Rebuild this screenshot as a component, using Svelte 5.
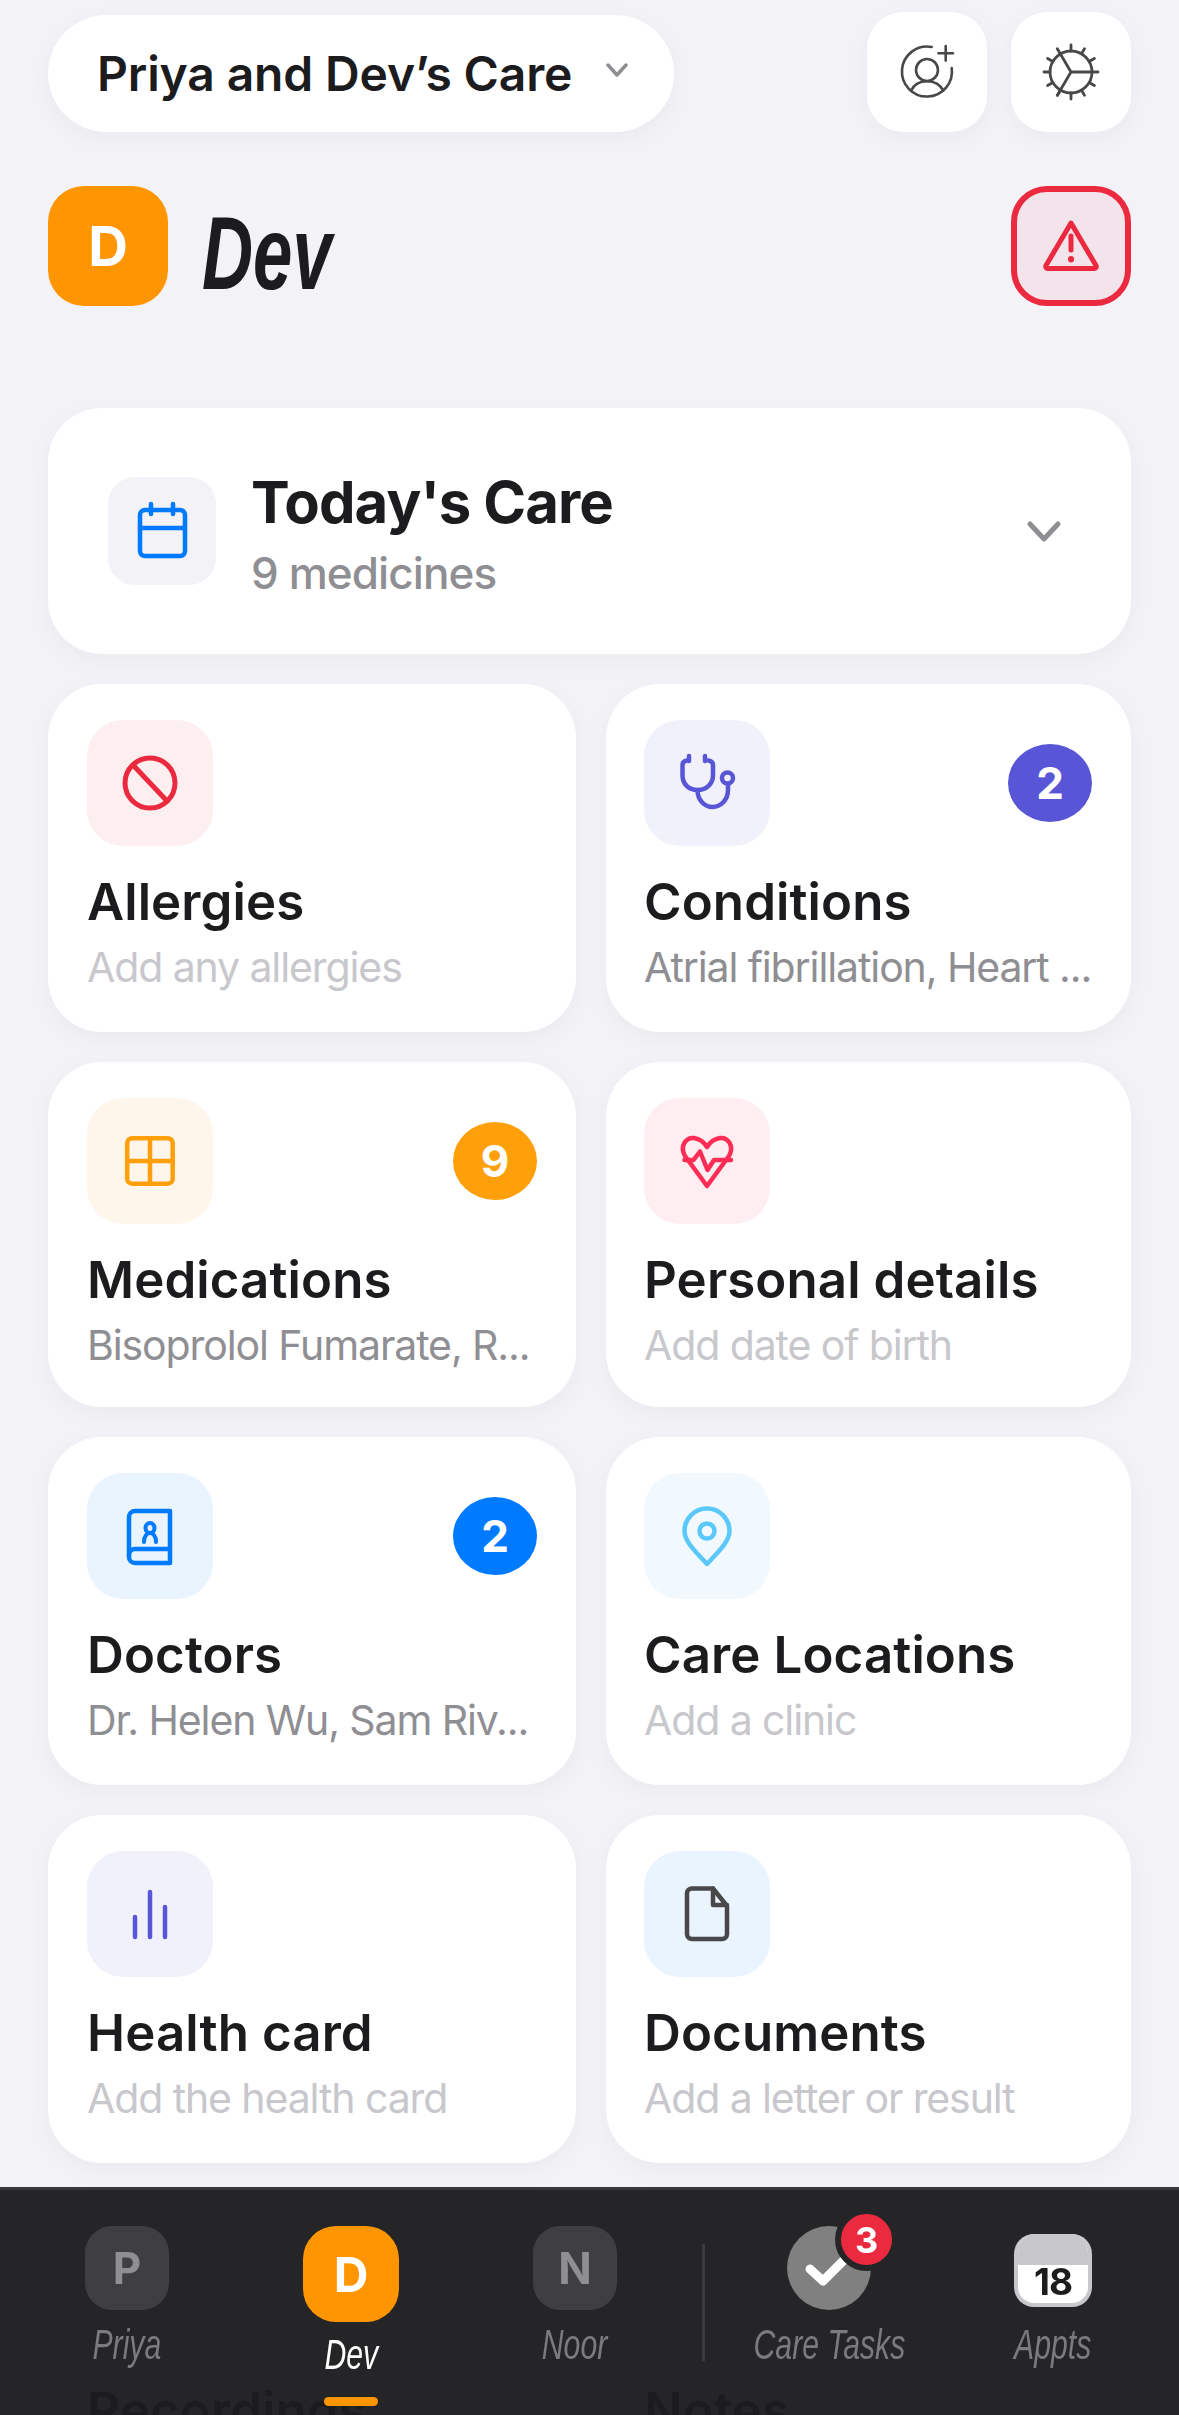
<script>
	const cards = [
		{ icon: 'ban', tile: '#fdeeef', title: 'Allergies', sub: 'Add any allergies', empty: true },
		{ icon: 'stethoscope', tile: '#f1f1fc', title: 'Conditions', sub: 'Atrial fibrillation, Heart ...', count: 2, badge: '#5856d6' },
		{ icon: 'pills', tile: '#fff6eb', title: 'Medications', sub: 'Bisoprolol Fumarate, R...', count: 9, badge: '#ff9f0a' },
		{ icon: 'heart', tile: '#ffeef1', title: 'Personal details', sub: 'Add date of birth', empty: true },
		{ icon: 'book', tile: '#e9f4ff', title: 'Doctors', sub: 'Dr. Helen Wu, Sam Riv...', count: 2, badge: '#007aff' },
		{ icon: 'pin', tile: '#f1f9ff', title: 'Care Locations', sub: 'Add a clinic', empty: true },
		{ icon: 'bars', tile: '#f1f1fc', title: 'Health card', sub: 'Add the health card', empty: true },
		{ icon: 'doc', tile: '#e9f4ff', title: 'Documents', sub: 'Add a letter or result', empty: true },
		{ icon: 'none', tile: '#f2f2f7', title: 'Recordings', sub: '', empty: true },
		{ icon: 'none', tile: '#f2f2f7', title: 'Notes', sub: '', empty: true }
	];

	const people = [
		{ letter: 'P', name: 'Priya' },
		{ letter: 'D', name: 'Dev', active: true },
		{ letter: 'N', name: 'Noor' }
	];

	// gear ticks, every 30 degrees
	const ticks = [30, 60, 90, 120, 150, 180, 210, 270, 300, 330];
</script>

<div class="page">
	<header class="top">
		<button class="care-pill">
			<span>Priya and Dev’s Care</span>
			<svg width="22" height="14" viewBox="0 0 22 14" fill="none" stroke="#8e8e93" stroke-width="3.5" stroke-linecap="round" stroke-linejoin="round"><path d="M2 2l9 10 9-10" /></svg>
		</button>
		<div class="top-actions">
			<button class="square">
				<svg width="80" height="80" viewBox="0 0 80 80" fill="none" stroke="#48484a" stroke-width="2.6" stroke-linecap="round">
					<path d="M44.7 15A25 25 0 1 0 64.7 36" />
					<path d="M58.7 14v14.6M51.4 21.3H66" />
					<circle cx="40" cy="38" r="11" />
					<path d="M24 58.7C30 46 50 46 56.3 58.7" />
				</svg>
			</button>
			<button class="square">
				<svg width="80" height="80" viewBox="0 0 80 80" fill="none" stroke="#48484a" stroke-width="2.8" stroke-linecap="round">
					<circle cx="40" cy="40" r="21" />
					<path d="M40 40H67M40 40L26.3 16.7M40 40L26.3 63.3" />
					{#each ticks as t}
						<line x1="61" y1="40" x2="67" y2="40" transform="rotate({t} 40 40)" />
					{/each}
				</svg>
			</button>
		</div>
	</header>

	<section class="profile">
		<div class="avatar">D</div>
		<h1>Dev</h1>
		<button class="alert">
			<svg width="60" height="54" viewBox="0 0 60 54" fill="none" stroke="#eb2a3f" stroke-width="5" stroke-linecap="round" stroke-linejoin="round">
				<path d="M30 4L5 46.5a2 2 0 0 0 2 3h46a2 2 0 0 0 2-3z" />
				<path d="M30 17v14" />
				<path d="M30 40v.5" stroke-width="6" />
			</svg>
		</button>
	</section>

	<section class="today">
		<div class="today-tile">
			<svg width="60" height="60" viewBox="0 0 60 60" fill="none" stroke="#007aff" stroke-width="4.5" stroke-linecap="round" stroke-linejoin="round">
				<rect x="8" y="9" width="45" height="46" rx="5" />
				<path d="M8 27h45M19 3v10M41 3v10" />
			</svg>
		</div>
		<div class="today-text">
			<h2>Today's Care</h2>
			<p>9 medicines</p>
		</div>
		<svg class="today-chevron" width="36" height="24" viewBox="0 0 36 24" fill="none" stroke="#8e8e93" stroke-width="5" stroke-linecap="round" stroke-linejoin="round"><path d="M4 4l14 15L32 4" /></svg>
	</section>

	<section class="grid">
		{#each cards as c}
			<article class="card">
				<div class="card-top">
					<div class="tile" style="background: {c.tile}">
						<svg width="60" height="60" viewBox="0 0 60 60" fill="none" stroke-width="4.5" stroke-linecap="round" stroke-linejoin="round">
							{#if c.icon === 'ban'}
								<g stroke="#eb2a3f" stroke-width="5">
									<circle cx="30" cy="30" r="25" />
									<path d="M13 12l34 36" />
								</g>
							{:else if c.icon === 'stethoscope'}
								<g stroke="#5856d6">
									<path d="M10 7.5C7 8 5.5 9.5 5.5 12v10c0 9 6 15 15 15s15.500-6 15.500-15V12c0-2.500-1.500-4-4.500-4.500" />
									<path d="M12 3v5M28 3v5" />
									<path d="M20.500 37c0 10 7 17 15 17s15.500-7 15.500-17v-6" />
									<circle cx="50.500" cy="25" r="5.500" />
								</g>
							{:else if c.icon === 'pills'}
								<g stroke="#ff9f0a">
									<rect x="7.200" y="7.200" width="45.500" height="45.500" rx="5" />
									<path d="M30 7v46M7 30h46" />
								</g>
							{:else if c.icon === 'heart'}
								<g stroke="#ff2d55">
									<path d="M30 55L8 25C2 14 10 6 17 7C23 8 27 11 30 16C33 11 37 8 43 7C50 6 58 14 52 25Z" />
									<path d="M7.500 29H16.500L23 20.500L30.500 39L37 29H54" />
								</g>
							{:else if c.icon === 'book'}
								<g stroke="#007aff">
									<path d="M50 5H15a6 6 0 0 0-6 6v40a6 6 0 0 0 6 6h35z" />
									<path d="M9 49a6 6 0 0 1 6-6h35" />
									<ellipse cx="30" cy="22" rx="4.500" ry="5" stroke-width="4" />
									<path d="M24 36c0-6 3-9 6-9s6 3 6 9" stroke-width="4" />
								</g>
							{:else if c.icon === 'pin'}
								<g stroke="#5ac8fa">
									<path d="M30 58C20 47 7.500 36 7.500 25a22.500 22.500 0 0 1 45 0C52.500 36 40 47 30 58Z" />
									<circle cx="30" cy="25" r="7.500" />
								</g>
							{:else if c.icon === 'bars'}
								<path d="M15 33v20M30 8v45M45 23v30" stroke="#5856d6" />
							{:else if c.icon === 'doc'}
								<g stroke="#48484a">
									<path d="M36 4.500H15a5 5 0 0 0-5 5V50a5 5 0 0 0 5 5h30a5 5 0 0 0 5-5V22z" />
									<path d="M36 4.500V21h14" />
								</g>
							{/if}
						</svg>
					</div>
					{#if c.count}
						<span class="count" style="background: {c.badge}">{c.count}</span>
					{/if}
				</div>
				<h3>{c.title}</h3>
				<p class:empty={c.empty}>{c.sub}</p>
			</article>
		{/each}
	</section>
</div>

<nav class="tabbar">
	{#each people as p}
		<div class="tab" class:active={p.active}>
			<div class="tab-avatar">{p.letter}</div>
			<span class="tab-label">{p.name}</span>
			{#if p.active}
				<div class="tab-mark"></div>
			{/if}
		</div>
	{/each}
	<div class="tab-divider"></div>
	<div class="tab">
		<div class="tasks">
			<svg width="84" height="84" viewBox="0 0 84 84" fill="none" stroke="#fff" stroke-width="9" stroke-linecap="round" stroke-linejoin="round"><path d="M23 43l13 12 24-24" /></svg>
			<span class="tasks-badge">3</span>
		</div>
		<span class="tab-label">Care Tasks</span>
	</div>
	<div class="tab">
		<div class="cal">
			<div class="cal-head"></div>
			<div class="cal-day">18</div>
		</div>
		<span class="tab-label">Appts</span>
	</div>
</nav>

<style>
	:global(body) {
		background: #f2f2f7;
		overflow: hidden;
	}

	.page {
		height: 2415px;
		overflow: hidden;
		box-sizing: border-box;
		padding: 12px 48px 0;
		font-family: Inter, "Noto Sans", sans-serif;
		color: #1c1c1e;
	}

	button {
		border: none;
		padding: 0;
		font-family: inherit;
		color: inherit;
	}

	h1, h2, h3, p {
		margin: 0;
	}

	.top {
		display: flex;
		align-items: flex-end;
		justify-content: space-between;
	}

	.care-pill {
		display: flex;
		align-items: center;
		gap: 34px;
		height: 117px;
		width: 626px;
		box-sizing: border-box;
		padding: 0 0 0 49px;
		border-radius: 60px;
		background: #fff;
		box-shadow: 0 6px 24px rgba(0, 0, 0, 0.04);
		font-size: 48px;
		font-weight: 600;
		letter-spacing: -0.15px;
	}

	.care-pill svg {
		margin-top: -8px;
	}

	.top-actions {
		display: flex;
		gap: 24px;
	}

	.square {
		display: flex;
		align-items: center;
		justify-content: center;
		width: 120px;
		height: 120px;
		border-radius: 36px;
		background: #fff;
		box-shadow: 0 6px 24px rgba(0, 0, 0, 0.04);
	}

	.profile {
		display: flex;
		align-items: center;
		margin-top: 54px;
	}

	.avatar {
		display: flex;
		align-items: center;
		justify-content: center;
		width: 120px;
		height: 120px;
		border-radius: 36px;
		background: #ff9500;
		color: #fff;
		font-size: 55px;
		font-weight: 700;
	}

	/* no script face installed: squeezed italic stands in for the handwriting */
	.profile h1 {
		flex: 1;
		margin-left: 34px;
		padding-top: 14px;
		font-family: "Liberation Sans", sans-serif;
		font-style: italic;
		font-weight: 700;
		font-size: 104px;
		line-height: 106px;
		transform: scaleX(0.68);
		transform-origin: left center;
	}

	.alert {
		display: flex;
		align-items: center;
		justify-content: center;
		box-sizing: border-box;
		width: 120px;
		height: 120px;
		border: 6px solid #eb2a3f;
		border-radius: 36px;
		background: #f2e4ea;
	}

	.today {
		display: flex;
		align-items: flex-start;
		box-sizing: border-box;
		height: 246px;
		margin-top: 102px;
		padding: 69px 60px 0;
		border-radius: 54px;
		background: #fff;
		box-shadow: 0 6px 24px rgba(0, 0, 0, 0.04);
	}

	.today-tile {
		display: flex;
		align-items: center;
		justify-content: center;
		width: 108px;
		height: 108px;
		border-radius: 27px;
		background: #f2f2f7;
	}

	.today-text {
		flex: 1;
		margin-left: 35px;
		margin-top: -11px;
	}

	.today-text h2 {
		font-size: 58px;
		font-weight: 700;
		line-height: 72px;
		letter-spacing: -0.9px;
	}

	.today-text p {
		margin-top: 7px;
		font-size: 44px;
		font-weight: 500;
		line-height: 56px;
		letter-spacing: -0.9px;
		color: #8e8e93;
	}

	.today-chevron {
		margin-top: 43px;
		margin-right: 9px;
	}

	.grid {
		display: grid;
		grid-template-columns: 528px 525px;
		gap: 30px;
		margin-top: 30px;
	}

	.card {
		box-sizing: border-box;
		min-width: 0;
		padding: 36px 39px 40px;
		border-radius: 54px;
		background: #fff;
		box-shadow: 0 6px 24px rgba(0, 0, 0, 0.04);
	}

	.card:nth-child(even) {
		padding-left: 38px;
	}

	.card:nth-child(3),
	.card:nth-child(4) {
		padding-bottom: 37px;
	}

	.card-top {
		display: flex;
		align-items: center;
		justify-content: space-between;
	}

	.tile {
		display: flex;
		align-items: center;
		justify-content: center;
		width: 126px;
		height: 126px;
		border-radius: 36px;
	}

	.count {
		display: flex;
		align-items: center;
		justify-content: center;
		width: 84px;
		height: 78px;
		border-radius: 50%;
		color: #fff;
		font-size: 44px;
		font-weight: 700;
	}

	.card h3 {
		margin-top: 26px;
		font-size: 51px;
		font-weight: 600;
		line-height: 60px;
		letter-spacing: 0.1px;
	}

	.card p {
		margin-top: 10px;
		font-size: 41px;
		line-height: 50px;
		height: 50px;
		color: #8e8e93;
		white-space: nowrap;
		overflow: hidden;
		text-overflow: ellipsis;
		letter-spacing: -1.1px;
	}

	.card p.empty {
		color: #c7c7cc;
	}

	/* sits over the last row of cards, which shows through very faintly */
	.tabbar {
		position: fixed;
		left: 0;
		right: 0;
		bottom: 0;
		display: flex;
		box-sizing: border-box;
		height: 228px;
		padding: 36px 14px 0 15px;
		border-top: 3px solid #38383a;
		background: rgba(28, 28, 30, 0.96);
		font-family: Inter, "Noto Sans", sans-serif;
	}

	.tab {
		flex: 1;
		display: flex;
		flex-direction: column;
		align-items: center;
		min-width: 0;
	}

	.tab-avatar {
		display: flex;
		align-items: center;
		justify-content: center;
		width: 84px;
		height: 84px;
		border-radius: 27px;
		background: #3f3f41;
		color: #8e8e93;
		font-size: 44px;
		font-weight: 700;
	}

	.tab.active .tab-avatar {
		width: 96px;
		height: 96px;
		border-radius: 33px;
		background: #ff9500;
		color: #fff;
		font-size: 48px;
	}

	.tab-label {
		margin-top: 8px;
		font-family: "Liberation Sans", sans-serif;
		font-style: italic;
		font-size: 42px;
		line-height: 54px;
		color: #7b7b7d;
		white-space: nowrap;
		transform: scaleX(0.72);
	}

	.tab.active .tab-label {
		margin-top: 6px;
		color: #fff;
	}

	.tab-mark {
		width: 54px;
		height: 9px;
		margin-top: 15px;
		border-radius: 5px;
		background: #ff9500;
	}

	.tab-divider {
		flex: none;
		width: 3px;
		height: 117px;
		margin: 18px 12px 0 15px;
		background: #3c3c3e;
	}

	.tasks {
		position: relative;
		width: 84px;
		height: 84px;
		border-radius: 50%;
		background: #808080;
	}

	.tasks-badge {
		position: absolute;
		top: -18px;
		left: 48px;
		display: flex;
		align-items: center;
		justify-content: center;
		box-sizing: border-box;
		width: 63px;
		height: 63px;
		border: 6px solid #252527;
		border-radius: 50%;
		background: #eb2a3f;
		color: #fff;
		font-size: 36px;
		font-weight: 700;
	}

	.cal {
		display: flex;
		flex-direction: column;
		box-sizing: border-box;
		width: 78px;
		height: 73px;
		margin: 8px 0 3px;
		border: 4px solid #c7c7cc;
		border-top: none;
		border-radius: 20px;
		background: #fff;
		overflow: hidden;
	}

	.cal-head {
		flex: none;
		height: 31px;
		background: #c7c7cc;
	}

	.cal-day {
		margin-top: -2px;
		text-align: center;
		font-size: 37px;
		font-weight: 700;
		line-height: 38px;
		letter-spacing: -1px;
		color: #1c1c1e;
	}
</style>
